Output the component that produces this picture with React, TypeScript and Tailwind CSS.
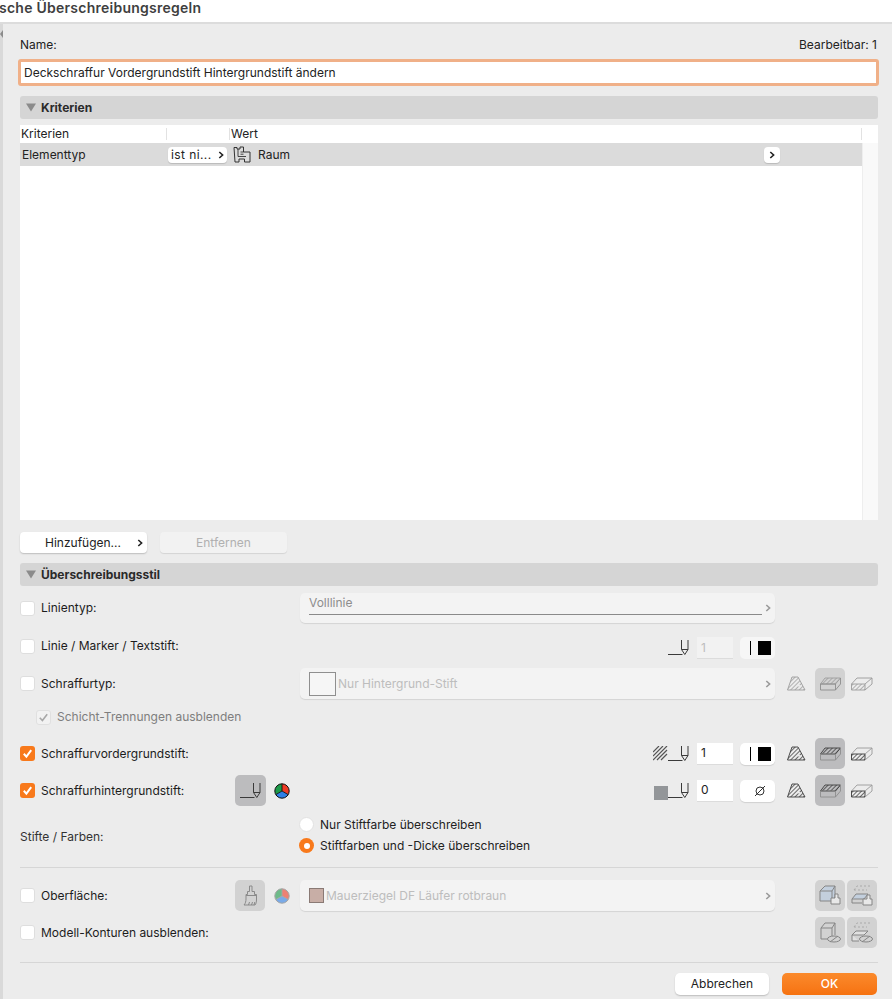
import React from "react";

const ink = "#3a3a3a";

function Chevron({ color = "#222", size = 8 }: { color?: string; size?: number }) {
  return (
    <svg width={size - 2} height={size} viewBox="0 0 6 8" className="shrink-0">
      <path d="M1.3 1 L4.6 4 L1.3 7" fill="none" stroke={color} strokeWidth="1.6" />
    </svg>
  );
}

function Triangle() {
  return (
    <svg width="10" height="9" viewBox="0 0 10 9" className="shrink-0">
      <path d="M0 0.5 H10 L5 8.5 Z" fill="#8b8b8b" />
    </svg>
  );
}

function Check({ on }: { on?: boolean }) {
  if (on)
    return (
      <div className="w-[15px] h-[15px] rounded-[3px] bg-[#f8791b] flex items-center justify-center shrink-0">
        <svg width="11" height="11" viewBox="0 0 11 11">
          <path d="M1.8 5.8 L4.4 8.6 L9.2 2.2" fill="none" stroke="#fff" strokeWidth="2" />
        </svg>
      </div>
    );
  return <div className="w-[15px] h-[15px] rounded-[3px] bg-white border border-[#dedede] shrink-0" />;
}

function Pen({ color = ink }: { color?: string }) {
  return (
    <svg width="22" height="16" viewBox="0 0 22 16" className="shrink-0">
      <path
        d="M0 14.5 H14.5 M13.5 0 V9.5 L16.8 14.5 L20 9.5 V0 M13.5 9.5 H20"
        fill="none"
        stroke={color}
        strokeWidth="1"
      />
    </svg>
  );
}

function Hatch({ id, color }: { id: string; color: string }) {
  return (
    <pattern id={id} width="3" height="3" patternUnits="userSpaceOnUse" patternTransform="rotate(45)">
      <rect width="3" height="3" fill="none" />
      <line x1="0" y1="0" x2="0" y2="3" stroke={color} strokeWidth="1.5" />
    </pattern>
  );
}

function CutIcon({ color }: { color: string }) {
  const id = React.useId();
  return (
    <svg width="19" height="15" viewBox="0 0 19 15" className="shrink-0">
      <defs>
        <Hatch id={id} color={color} />
      </defs>
      <path d="M0.5 14 L5 1 H11 L18 14 Z" fill={`url(#${id})`} stroke={color} strokeWidth="0.9" />
      <path d="M10.5 10.5 L11.5 8 L14.5 10.5 Z" fill="#ececec" />
    </svg>
  );
}

function TopIcon({ color }: { color: string }) {
  const id = React.useId();
  return (
    <svg width="21" height="14" viewBox="0 0 21 14" className="shrink-0">
      <defs>
        <Hatch id={id} color={color} />
      </defs>
      <path d="M0.5 7 L5 1 H20.5 L15.5 7 Z" fill={`url(#${id})`} stroke={color} strokeWidth="0.9" />
      <path d="M0.5 7 H15.5 V13 H0.5 Z M15.5 13 L20.5 7 V1" fill="none" stroke="#8d8d8d" strokeWidth="0.9" />
    </svg>
  );
}

function FrontIcon({ color }: { color: string }) {
  const id = React.useId();
  return (
    <svg width="22" height="14" viewBox="0 0 22 14" className="shrink-0">
      <defs>
        <Hatch id={id} color={color} />
      </defs>
      <path d="M0.5 7 H14 V13 H0.5 Z" fill={`url(#${id})`} stroke={color} strokeWidth="0.9" />
      <path d="M0.5 7 L6 1 H21 L14 7 M14 13 L21 7 V1" fill="none" stroke="#9a9a9a" strokeWidth="0.9" />
    </svg>
  );
}

function ViewTriplet({ dim }: { dim?: boolean }) {
  const c = dim ? "#9c9c9c" : "#3c3c3c";
  return (
    <div className="flex items-center ml-[12px] shrink-0">
      <CutIcon color={c} />
      <div
        className={`w-[30px] h-[31px] rounded-[5px] ml-[9px] flex items-center justify-center ${
          dim ? "bg-[#d2d2d2]" : "bg-[#bcbcbe]"
        }`}
      >
        <TopIcon color={c} />
      </div>
      <div className="ml-[6px]">
        <FrontIcon color={c} />
      </div>
    </div>
  );
}

function Wheel({ dim }: { dim?: boolean }) {
  return (
    <svg width="16" height="16" viewBox="0 0 16 16" className="shrink-0">
      <g opacity={dim ? 0.6 : 1}>
        <path d="M8 8 V0.8 A7.2 7.2 0 0 1 14.2 11.6 Z" fill="#ee3b24" />
        <path d="M8 8 L14.2 11.6 A7.2 7.2 0 0 1 1.8 11.6 Z" fill="#2d7fe6" />
        <path d="M8 8 L1.8 11.6 A7.2 7.2 0 0 1 8 0.8 Z" fill="#1c9a49" />
        <path d="M8 0.8 V8 L14.2 11.6 M8 8 L1.8 11.6" stroke={dim ? "#777" : "#111"} strokeWidth="0.9" fill="none" />
        <circle cx="8" cy="8" r="7.2" fill="none" stroke={dim ? "#777" : "#111"} strokeWidth="1" />
      </g>
    </svg>
  );
}

function Dropdown({ children, tall }: { children: React.ReactNode; tall?: boolean }) {
  return (
    <div
      className={`w-[475px] ${tall ? "h-[31px]" : "h-[30px]"} rounded-[5px] bg-[#f3f3f3] shadow-[0_1px_1px_rgba(0,0,0,0.1)] flex items-center pl-[9px] pr-[4px] shrink-0`}
    >
      <div className="flex-1 min-w-0 flex items-center">{children}</div>
      <Chevron color="#9a9a9a" />
    </div>
  );
}

function NumBox({ value, dim }: { value: string; dim?: boolean }) {
  return (
    <div
      className={`w-[36px] h-[22px] ml-[7px] border-b border-[#dcdcdc] pl-[4px] flex items-center text-[12px] shrink-0 ${
        dim ? "text-[#bdbdbd] bg-[#f2f2f2]" : "text-[#222] bg-white"
      }`}
    >
      {value}
    </div>
  );
}

function PenColor({ dim }: { dim?: boolean }) {
  return (
    <div
      className={`w-[35px] h-[22px] ml-[7px] rounded-[5px] flex items-center justify-end pr-[4px] gap-[7px] shrink-0 ${
        dim ? "bg-[#f6f6f6]" : "bg-white shadow-[0_1px_1px_rgba(0,0,0,0.12)]"
      }`}
    >
      <div className="w-px h-[14px] bg-black" />
      <div className="w-[13px] h-[14px] bg-black" />
    </div>
  );
}

function SectionHeader({ title }: { title: string }) {
  return (
    <div className="h-[23px] rounded-[3px] bg-[#d5d5d5] flex items-center pl-[6px] gap-[5px] font-bold text-[#2a2a2a]">
      <Triangle />
      <span>{title}</span>
    </div>
  );
}

function Label({ children }: { children: React.ReactNode }) {
  return <span className="ml-[6px] text-[#1c1c1c] whitespace-nowrap">{children}</span>;
}

function RoomIcon() {
  return (
    <svg width="18" height="17" viewBox="0 0 18 17" className="shrink-0">
      <path
        d="M1 1.5 H4 V3 H7 V1 H10.5 V6 H17 V16 H11.5 V13 H6 V16 H2 Z"
        fill="none"
        stroke="#333"
        strokeWidth="1"
      />
      <path d="M5 3 V10.5 H13 M7.5 6 H10.5 M7.5 8.2 H10.5" fill="none" stroke="#333" strokeWidth="0.9" />
    </svg>
  );
}

function Brush() {
  return (
    <svg width="17" height="21" viewBox="0 0 17 21">
      <path
        d="M7.5 1 H10 V6.5 H12.5 V9.5 H14.5 V14 C14.5 17 14 19 13 20 H2 C3.5 18.5 4 16 4 14 V9.5 H5.5 V6.5 H7.5 Z M4 10.5 H14.5 M6.5 20 L7.5 17 M9.5 20 L10.5 17 M12 20 L12.8 17"
        fill="none"
        stroke="#8a8a8a"
        strokeWidth="1"
      />
    </svg>
  );
}

function CubeIcon({ variant }: { variant: 0 | 1 | 2 | 3 }) {
  const g = "#858585";
  return (
    <svg width="24" height="24" viewBox="0 0 24 24">
      {variant === 0 && (
        <>
          <path d="M2 7 L7 2 H17 V13 L14 17 H2 Z" fill="#c3cfdd" stroke={g} />
          <path d="M2 7 H14 V17 M14 7 L17 2" fill="none" stroke={g} />
          <path d="M17 10 H20 V14 H22 V20 H13 V14 H17 Z" fill="#e8e8e8" stroke={g} />
        </>
      )}
      {variant === 1 && (
        <>
          <path d="M4 6 L7 2 H21 M4 6 H17" fill="none" stroke="#aaa" strokeDasharray="2 2" />
          <path d="M2 15 L6 10 H18 L14 15 Z" fill="#c3cfdd" stroke={g} />
          <path d="M2 15 V19 H12 M14 15 V17" fill="none" stroke={g} />
          <path d="M17 11 H20 V15 H22 V21 H13 V15 H17 Z" fill="#e8e8e8" stroke={g} />
        </>
      )}
      {variant === 2 && (
        <>
          <path d="M3 7 L7 2 H17 V14 M3 7 H14 V15 M3 7 V18 H9 M14 7 L17 2" fill="none" stroke={g} />
          <ellipse cx="16" cy="18" rx="6.5" ry="3" fill="none" stroke={g} />
          <path d="M12 21 L20 15" stroke={g} />
        </>
      )}
      {variant === 3 && (
        <>
          <path d="M4 6 L7 2 H21 M4 6 H17" fill="none" stroke="#aaa" strokeDasharray="2 2" />
          <path d="M2 14 L6 10 H18 L14 14 Z M2 14 V20 H9" fill="#e1e1e1" stroke={g} />
          <ellipse cx="16" cy="18" rx="6.5" ry="3" fill="none" stroke={g} />
          <path d="M12 21 L20 15" stroke={g} />
        </>
      )}
    </svg>
  );
}

function CubeBtn({ variant }: { variant: 0 | 1 | 2 | 3 }) {
  return (
    <div className="w-[30px] h-[31px] rounded-[5px] bg-[#d2d2d2] flex items-center justify-center shrink-0">
      <CubeIcon variant={variant} />
    </div>
  );
}

export default function App() {
  return (
    <div
      className="w-[892px] h-[999px] overflow-hidden bg-[#ececec] flex flex-col text-[12px] leading-none text-[#222]"
      style={{ fontFamily: "Inter, 'Liberation Sans', sans-serif" }}
    >
      <div className="h-[24px] bg-white border-b-2 border-[#dcdcdc] flex items-center pb-[6px] shrink-0">
        <span className="ml-[-1px] text-[14px] font-semibold tracking-[0.25px] text-[#3f3f3f] whitespace-nowrap">
          sche Überschreibungsregeln
        </span>
      </div>

      <div className="flex-1 flex min-h-0">
        <div className="w-[3px] bg-[#d9d9d9] shrink-0 flex flex-col">
          <div className="mt-[6px] w-0 h-0 border-y-[4px] border-y-transparent border-r-[3px] border-r-[#8b8b8b]" />
        </div>

        <div className="flex-1 flex flex-col pl-[17px] pr-[14px] min-w-0">
          {/* Name */}
          <div className="h-[22px] mt-[10px] flex items-center justify-between pr-px shrink-0">
            <span>Name:</span>
            <span>Bearbeitbar: 1</span>
          </div>
          <div className="h-[27px] mt-[3px] ml-[-2px] mr-[-1px] rounded-[3px] border-[3px] border-[#f0b088] bg-white flex items-center pl-[3px] shrink-0 text-[#222]">
            Deckschraffur Vordergrundstift Hintergrundstift ändern
          </div>

          {/* Kriterien */}
          <div className="mt-[10px] shrink-0">
            <SectionHeader title="Kriterien" />
          </div>
          <div className="mt-[6px] h-[395px] bg-white flex flex-col shrink-0">
            <div className="h-[18px] flex items-center shrink-0">
              <div className="w-[146px] pl-px">Kriterien</div>
              <div className="w-px h-[12px] bg-[#e2e2e2]" />
              <div className="w-[62px]" />
              <div className="w-px h-[12px] bg-[#e2e2e2]" />
              <div className="flex-1 pl-px">Wert</div>
              <div className="w-px h-[12px] bg-[#e2e2e2] mr-[16px]" />
            </div>
            <div className="flex-1 flex min-h-0">
              <div className="flex-1 flex flex-col">
                <div className="h-[23px] bg-[#dbdbdb] flex items-center shrink-0">
                  <div className="w-[148px] pl-[2px]">Elementtyp</div>
                  <div className="w-[59px] h-[16px] rounded-[4px] bg-white shadow-[0_1px_1px_rgba(0,0,0,0.15)] flex items-center justify-between pl-[3px] pr-[3px] tracking-[0.4px]">
                    <span>ist ni...</span>
                    <Chevron />
                  </div>
                  <div className="ml-[6px]">
                    <RoomIcon />
                  </div>
                  <span className="ml-[7px]">Raum</span>
                  <div className="w-[16px] h-[16px] ml-auto mr-[82px] rounded-[4px] bg-white shadow-[0_1px_1px_rgba(0,0,0,0.15)] flex items-center justify-center">
                    <Chevron />
                  </div>
                </div>
              </div>
              <div className="w-[16px] bg-[#f9f9f9] border-l border-[#eeeeee] shrink-0" />
            </div>
          </div>

          {/* Buttons */}
          <div className="mt-[12px] flex gap-[13px] shrink-0">
            <div className="w-[127px] h-[21px] rounded-[4px] bg-white shadow-[0_1px_1.5px_rgba(0,0,0,0.2)] flex items-center pl-[25px] pr-[4px]">
              <span className="flex-1">Hinzufügen...</span>
              <Chevron />
            </div>
            <div className="w-[127px] h-[21px] rounded-[4px] bg-[#f2f2f2] shadow-[0_1px_1px_rgba(0,0,0,0.1)] flex items-center justify-center text-[#b0b0b0]">
              Entfernen
            </div>
          </div>

          {/* Style */}
          <div className="mt-[10px] shrink-0">
            <SectionHeader title="Überschreibungsstil" />
          </div>

          <div className="mt-[7px] h-[30px] flex items-center shrink-0">
            <Check />
            <Label>Linientyp:</Label>
            <div className="ml-auto mr-[103px]">
              <Dropdown>
                <div className="w-[453px] flex flex-col gap-[5px] pb-[4px]">
                  <span className="text-[#8d8d8d]">Volllinie</span>
                  <div className="h-px bg-[#8a8a8a]" />
                </div>
              </Dropdown>
            </div>
          </div>

          <div className="mt-[8px] h-[30px] flex items-center shrink-0">
            <Check />
            <Label>Linie / Marker / Textstift:</Label>
            <div className="ml-auto mr-[103px] mt-[4px] flex items-center">
              <Pen />
              <NumBox value="1" dim />
              <PenColor dim />
            </div>
          </div>

          <div className="mt-[7px] h-[31px] flex items-center shrink-0">
            <Check />
            <Label>Schraffurtyp:</Label>
            <div className="ml-auto mr-[5px] flex items-center">
              <Dropdown tall>
                <div className="w-[27px] h-[24px] border border-[#8f8f8f] bg-[#f6f6f6] shrink-0" />
                <span className="ml-[2px] text-[#bdbdbd]">Nur Hintergrund-Stift</span>
              </Dropdown>
              <ViewTriplet dim />
            </div>
          </div>

          <div className="mt-[3px] h-[30px] flex items-center pl-[16px] shrink-0">
            <div className="w-[15px] h-[15px] rounded-[3px] bg-[#f2f2f2] border border-[#e0e0e0] flex items-center justify-center shrink-0">
              <svg width="11" height="11" viewBox="0 0 11 11">
                <path d="M1.8 5.8 L4.4 8.6 L9.2 2.2" fill="none" stroke="#a8a8a8" strokeWidth="1.6" />
              </svg>
            </div>
            <span className="ml-[6px] text-[#7e7e7e]">Schicht-Trennungen ausblenden</span>
          </div>

          <div className="mt-[6px] h-[31px] flex items-center shrink-0">
            <Check on />
            <Label>Schraffurvordergrundstift:</Label>
            <div className="ml-auto mr-[5px] flex items-center">
              <svg width="15" height="15" viewBox="0 0 15 15" className="shrink-0">
                <path
                  d="M0 6 L6 0 M0 10 L10 0 M0 14 L14 0 M4 14 L14 4 M8 14 L14 8"
                  stroke="#555"
                  strokeWidth="1.2"
                />
              </svg>
              <Pen />
              <NumBox value="1" />
              <PenColor />
              <ViewTriplet />
            </div>
          </div>

          <div className="mt-[6px] h-[31px] flex items-center shrink-0">
            <div className="w-[215px] flex items-center shrink-0">
              <Check on />
              <Label>Schraffurhintergrundstift:</Label>
            </div>
            <div className="w-[31px] h-[31px] rounded-[5px] bg-[#bcbcbe] flex items-center justify-center shrink-0">
              <Pen />
            </div>
            <div className="ml-[8px]">
              <Wheel />
            </div>
            <div className="ml-auto mr-[5px] flex items-center">
              <div className="w-[14px] h-[14px] bg-[#939699] shrink-0 mt-[4px]" />
              <Pen />
              <NumBox value="0" />
              <div className="w-[35px] h-[22px] ml-[7px] rounded-[5px] bg-white shadow-[0_1px_1px_rgba(0,0,0,0.12)] flex items-center justify-end pr-[9px] shrink-0">
                <svg width="12" height="12" viewBox="0 0 12 12">
                  <circle cx="6" cy="6" r="4" fill="none" stroke="#333" strokeWidth="1" />
                  <path d="M1 11 L11 1" stroke="#333" strokeWidth="1" />
                </svg>
              </div>
              <ViewTriplet />
            </div>
          </div>

          <div className="mt-[7px] h-[44px] flex items-center shrink-0">
            <span className="w-[279px] mt-[4px] text-[#333]">Stifte / Farben:</span>
            <div className="flex flex-col gap-[6px]">
              <div className="flex items-center h-[15px]">
                <div className="w-[15px] h-[15px] rounded-full bg-white border border-[#e2e2e2]" />
                <span className="ml-[6px]">Nur Stiftfarbe überschreiben</span>
              </div>
              <div className="flex items-center h-[15px]">
                <div className="w-[15px] h-[15px] rounded-full bg-[#f8791b] flex items-center justify-center">
                  <div className="w-[6px] h-[6px] rounded-full bg-white" />
                </div>
                <span className="ml-[6px]">Stiftfarben und -Dicke überschreiben</span>
              </div>
            </div>
          </div>

          <div className="mt-[10px] h-px bg-[#d6d6d6] shrink-0" />

          <div className="mt-[12px] h-[31px] flex items-center shrink-0">
            <div className="w-[215px] flex items-center shrink-0">
              <Check />
              <Label>Oberfläche:</Label>
            </div>
            <div className="w-[30px] h-[31px] rounded-[5px] bg-[#d2d2d2] flex items-center justify-center shrink-0">
              <Brush />
            </div>
            <div className="ml-[9px]">
              <Wheel dim />
            </div>
            <div className="ml-[10px]">
              <Dropdown tall>
                <div className="w-[15px] h-[15px] bg-[#c8aea6] border border-[#8a7a75] shrink-0" />
                <span className="ml-[2px] text-[#bdbdbd]">Mauerziegel DF Läufer rotbraun</span>
              </Dropdown>
            </div>
            <div className="ml-auto mr-px flex gap-[2px]">
              <CubeBtn variant={0} />
              <CubeBtn variant={1} />
            </div>
          </div>

          <div className="mt-[6px] h-[31px] flex items-center shrink-0">
            <Check />
            <Label>Modell-Konturen ausblenden:</Label>
            <div className="ml-auto mr-px flex gap-[2px]">
              <CubeBtn variant={2} />
              <CubeBtn variant={3} />
            </div>
          </div>

          <div className="mt-[14px] h-px bg-[#d6d6d6] shrink-0" />

          <div className="mt-[10px] flex justify-end gap-[13px] pr-px shrink-0">
            <div className="w-[94px] h-[22px] rounded-[5px] bg-white shadow-[0_1px_1.5px_rgba(0,0,0,0.2)] flex items-center justify-center">
              Abbrechen
            </div>
            <div className="w-[95px] h-[22px] rounded-[5px] bg-gradient-to-b from-[#fb8a2b] to-[#f6720f] flex items-center justify-center text-white font-medium">
              OK
            </div>
          </div>
        </div>
      </div>
    </div>
  );
}
